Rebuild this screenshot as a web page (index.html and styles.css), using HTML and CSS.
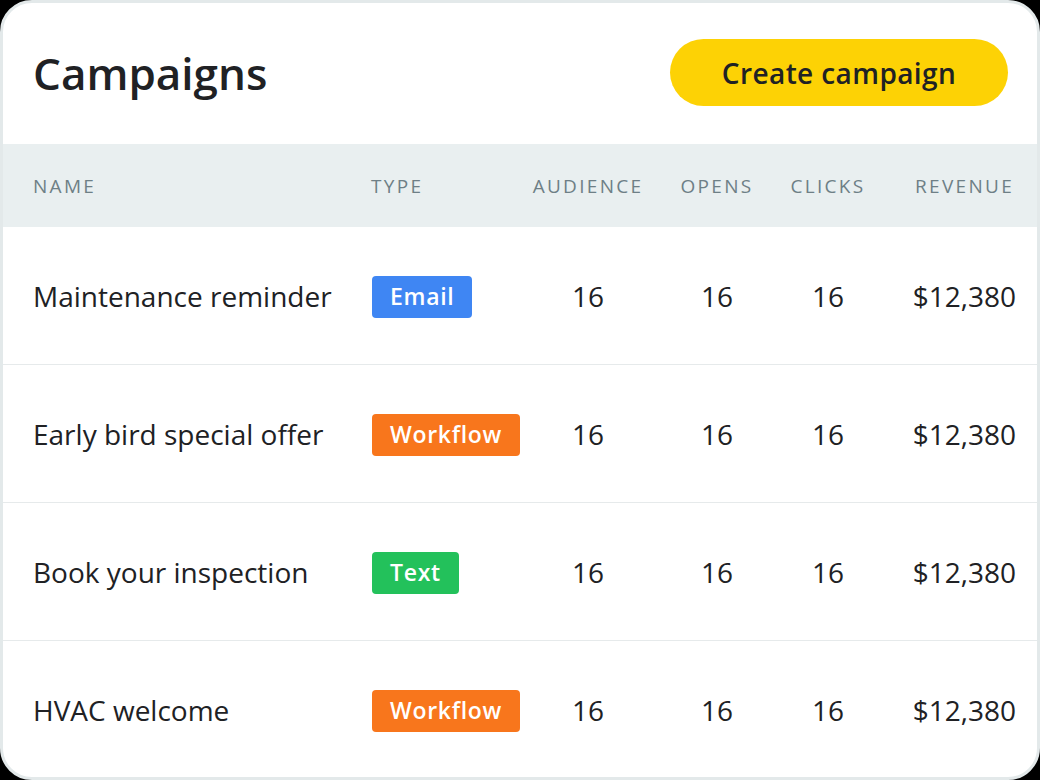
FILE: index.html
```html
<!DOCTYPE html>
<html lang="en">
<head>
  <meta charset="UTF-8" />
  <meta name="viewport" content="width=device-width, initial-scale=1.0" />
  <title>Campaigns</title>
  <link rel="stylesheet" href="styles.css">
</head>
<body>

<div class="card">
  <!-- Title bar -->
  <div class="card-head">
    <h1>Campaigns</h1>
    <button type="button" class="create-btn">Create campaign</button>
  </div>

  <!-- Campaign table -->
  <div class="table">
    <div class="row head-row">
      <span class="col-name">Name</span>
      <span class="col-type">Type</span>
      <span class="col-num">Audience</span>
      <span class="col-num">Opens</span>
      <span class="col-num">Clicks</span>
      <span class="col-rev">Revenue</span>
    </div>

    <div class="row">
      <span class="col-name">Maintenance reminder</span>
      <span class="col-type"><span class="badge email">Email</span></span>
      <span class="col-num">16</span>
      <span class="col-num">16</span>
      <span class="col-num">16</span>
      <span class="col-rev">$12,380</span>
    </div>

    <div class="row">
      <span class="col-name">Early bird special offer</span>
      <span class="col-type"><span class="badge workflow">Workflow</span></span>
      <span class="col-num">16</span>
      <span class="col-num">16</span>
      <span class="col-num">16</span>
      <span class="col-rev">$12,380</span>
    </div>

    <div class="row">
      <span class="col-name">Book your inspection</span>
      <span class="col-type"><span class="badge text">Text</span></span>
      <span class="col-num">16</span>
      <span class="col-num">16</span>
      <span class="col-num">16</span>
      <span class="col-rev">$12,380</span>
    </div>

    <div class="row last">
      <span class="col-name">HVAC welcome</span>
      <span class="col-type"><span class="badge workflow">Workflow</span></span>
      <span class="col-num">16</span>
      <span class="col-num">16</span>
      <span class="col-num">16</span>
      <span class="col-rev">$12,380</span>
    </div>
  </div>
</div>

</body>
</html>
```

FILE: styles.css
```css
/* General */
body {
  margin: 0;
  background-color: #000000;
  font-family: 'Open Sans', 'Liberation Sans', sans-serif;
  color: #202124;
}

/* Card frame */
.card {
  width: 1040px;
  height: 780px;
  box-sizing: border-box;
  border: 3px solid #e3e9ea;
  border-radius: 32px;
  background-color: #ffffff;
  overflow: hidden;
}

/* Title bar */
.card-head {
  display: flex;
  justify-content: space-between;
  align-items: center;
  padding: 36px 29px 38px 30px;
}

.card-head h1 {
  margin: 0;
  font-size: 44px;
  font-weight: 600;
  color: #202124;
}

.create-btn {
  height: 67px;
  width: 338px;
  border: none;
  border-radius: 34px;
  background-color: #fdd205;
  color: #202124;
  font-family: inherit;
  font-size: 28px;
  font-weight: 600;
  letter-spacing: 0.4px;
  cursor: pointer;
}

/* Table */
.row {
  display: grid;
  grid-template-columns: 338px 155px 124px 134px 88px 1fr;
  align-items: center;
  height: 137px;
  padding: 0 21px 0 30px;
  border-bottom: 1px solid #e6eaeb;
  font-size: 28px;
}

.row.last {
  border-bottom: none;
}

.head-row {
  height: 83px;
  padding-right: 23px;
  border-bottom: none;
  background-color: #e9eff0;
  font-size: 19px;
  text-transform: uppercase;
  letter-spacing: 2.3px;
  color: #6e7f86;
}

.col-num {
  text-align: center;
}

.col-rev {
  text-align: right;
}

/* Type badges */
.badge {
  display: inline-block;
  margin: 2px 0 0 1px;
  padding: 4px 18px 6px;
  border-radius: 4px;
  font-size: 23px;
  font-weight: 600;
  color: #ffffff;
  letter-spacing: 0.7px;
}

.badge.email {
  background-color: #3f86f3;
}

.badge.workflow {
  background-color: #f8761c;
}

.badge.text {
  background-color: #23c15b;
}
```
